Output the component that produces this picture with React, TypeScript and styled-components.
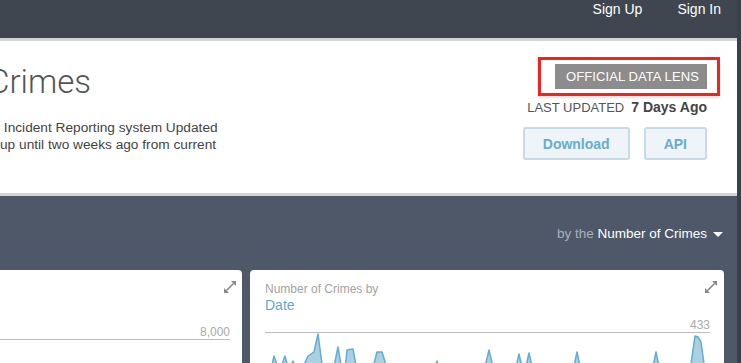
import React from "react";
import styled, { createGlobalStyle } from "styled-components";

const GlobalStyle = createGlobalStyle`
  html, body {
    margin: 0;
    padding: 0;
    overflow: hidden;
    background: #3a4049;
    font-family: "Liberation Sans", Arial, sans-serif;
  }
`;

const Page = styled.div`
  width: 737px;
  height: 100vh;
  overflow: hidden;
  background: #4e5868;
`;

const TopNav = styled.nav`
  height: 38px;
  background: #40464f;
  display: flex;
  justify-content: flex-end;
  align-items: flex-start;
  gap: 35px;
  padding: 1px 16px 0 0;
  box-sizing: border-box;
`;

const NavLink = styled.a`
  color: #fff;
  font-size: 14px;
  line-height: 16px;
  text-decoration: none;
`;

const HeaderPanel = styled.header`
  height: 131px;
  background: #fff;
  border-top: 3px solid #d4d4d4;
  border-bottom: 3px solid #d4d4d4;
  display: flex;
  justify-content: space-between;
  padding: 21px 30px 0 0;
`;

const Intro = styled.div`
  display: flex;
  flex-direction: column;
`;

const Title = styled.h1`
  margin: 0 0 17px -12px;
  font-family: Roboto, "Liberation Sans", sans-serif;
  font-weight: 300;
  font-size: 33px;
  line-height: 40px;
  color: #555;
`;

const DescLine = styled.span<{ $shift?: number }>`
  display: block;
  margin-left: ${(p) => p.$shift ?? 0}px;
  font-size: 13.7px;
  line-height: 17px;
  color: #444;
  white-space: nowrap;
`;

const Meta = styled.div`
  display: flex;
  flex-direction: column;
  align-items: flex-end;
  padding-top: 2px;
`;

const Badge = styled.span`
  position: relative;
  background: #8c8c8c;
  color: #fff;
  font-size: 13px;
  line-height: 25px;
  height: 25px;
  padding: 0 8px 0 11px;
  letter-spacing: 0.1px;
  text-transform: uppercase;

  &::after {
    content: "";
    position: absolute;
    left: -17px;
    right: -13px;
    top: -7px;
    bottom: -7px;
    border: 3px solid #f0241f;
    box-shadow: 0 2px 2px rgba(0, 0, 0, 0.12);
  }
`;

const Updated = styled.div`
  margin-top: 10px;
  font-size: 13px;
  line-height: 17px;
  color: #555;

  strong {
    margin-left: 7px;
    font-size: 14px;
    color: #444;
  }
`;

const Actions = styled.div`
  display: flex;
  gap: 14px;
  margin-top: 11px;
`;

const ActionButton = styled.button`
  height: 33px;
  padding: 0 18px;
  background: #eef4f7;
  border: 2px solid #c3dce8;
  border-radius: 3px;
  color: #66acd0;
  font-family: "Liberation Sans", Arial, sans-serif;
  font-weight: bold;
  font-size: 14px;
`;

const FilterBar = styled.div`
  height: 74px;
  display: flex;
  justify-content: flex-end;
  align-items: center;
  gap: 6px;
  padding-right: 14px;
  font-size: 13.5px;
  color: #a9b0ba;

  b {
    font-weight: normal;
    color: #fff;
  }
`;

const Caret = styled.span`
  width: 0;
  height: 0;
  border-left: 5px solid transparent;
  border-right: 5px solid transparent;
  border-top: 5px solid #fff;
  margin-top: 2px;
`;

const CardRow = styled.div`
  display: flex;
  gap: 8px;
  margin-left: -20px;
`;

const Card = styled.section<{ $width: number; $padLeft: number; $padRight: number }>`
  width: ${(p) => p.$width}px;
  height: 120px;
  box-sizing: border-box;
  background: #fff;
  border-radius: 4px 4px 0 0;
  padding: 11px ${(p) => p.$padRight}px 0 ${(p) => p.$padLeft}px;
`;

const CardHead = styled.div`
  display: flex;
  justify-content: space-between;
  align-items: flex-start;
`;

const CardTitle = styled.div`
  padding-top: 1px;
  font-size: 12px;
  line-height: 15px;
  color: #a3a3a3;

  em {
    display: block;
    font-style: normal;
    font-size: 14px;
    line-height: 17px;
    color: #5ea9d0;
  }
`;

const Axis = styled.div<{ $top: number; $right: number }>`
  margin: ${(p) => p.$top}px ${(p) => p.$right}px 0 0;
  border-bottom: 1px solid #bdbdbd;
  text-align: right;
  font-size: 12px;
  line-height: 14px;
  color: #aaa;
`;

const ChartSvg = styled.svg`
  display: block;
  width: 445px;
  height: 40px;
`;

const ExpandIcon = () => (
  <svg width="12" height="12" viewBox="0 0 12 12">
    <path d="M2.5 9.5 L9.5 2.5" stroke="#888" strokeWidth="1.6" />
    <path d="M12 0 L12 5 L7 0 Z" fill="#888" />
    <path d="M0 12 L0 7 L5 12 Z" fill="#888" />
  </svg>
);

const chartPath =
  "M265 375 L270 375 L274 357 L278 368 L281 368 L285 357 L289 372 L293 362 L296 372 " +
  "L303 368 L308 357 L314 353 L318 335 L322 365 L326 372 L333 372 L338 348 L342 372 " +
  "L345 372 L347 351 L353 350 L357 372 L372 372 L377 353 L382 353 L388 372 L434 372 " +
  "L437 362 L440 372 L484 372 L489 351 L494 372 L515 372 L519 355 L523 372 L525 372 " +
  "L529 354 L533 372 L573 372 L577 353 L581 372 L652 372 L656 353 L660 372 L690 372 " +
  "L695 337 L698 338 L701 343 L705 372 L710 375 Z";

export default function App() {
  return (
    <>
      <GlobalStyle />
      <Page>
        <TopNav>
          <NavLink href="#">Sign Up</NavLink>
          <NavLink href="#">Sign In</NavLink>
        </TopNav>

        <HeaderPanel>
          <Intro>
            <Title>Crimes</Title>
            <DescLine $shift={-19}>the Incident Reporting system Updated</DescLine>
            <DescLine>up until two weeks ago from current</DescLine>
          </Intro>
          <Meta>
            <Badge>Official Data Lens</Badge>
            <Updated>
              LAST UPDATED<strong>7 Days Ago</strong>
            </Updated>
            <Actions>
              <ActionButton>Download</ActionButton>
              <ActionButton>API</ActionButton>
            </Actions>
          </Meta>
        </HeaderPanel>

        <FilterBar>
          <span>
            by the <b>Number of Crimes</b>
          </span>
          <Caret />
        </FilterBar>

        <CardRow>
          <Card $width={262} $padLeft={12} $padRight={6}>
            <CardHead>
              <span />
              <ExpandIcon />
            </CardHead>
            <Axis $top={32} $right={6}>8,000</Axis>
          </Card>
          <Card $width={474} $padLeft={15} $padRight={7}>
            <CardHead>
              <CardTitle>
                Number of Crimes by
                <em>Date</em>
              </CardTitle>
              <ExpandIcon />
            </CardHead>
            <Axis $top={4} $right={7}>433</Axis>
            <ChartSvg viewBox="265 334 445 40" preserveAspectRatio="none">
              <path d={chartPath} fill="#a9d1e1" stroke="#64acd0" strokeWidth="1.5" strokeLinejoin="round" />
            </ChartSvg>
          </Card>
        </CardRow>
      </Page>
    </>
  );
}
